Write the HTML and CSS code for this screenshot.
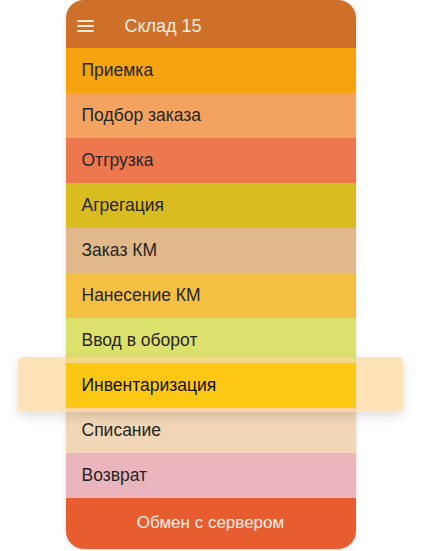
FILE: index.html
```html
<!DOCTYPE html>
<html lang="ru">
<head>
    <meta charset="UTF-8">
    <meta name="viewport" content="width=device-width, initial-scale=1.0">
    <title>Склад 15</title>
    <link rel="stylesheet" href="styles.css">
</head>
<body>
    <div class="phone">
        <div class="header">
            <span class="burger">
                <span></span><span></span><span></span>
            </span>
            <span class="title">Склад 15</span>
        </div>

        <div class="menu">
            <div class="row row-receive">Приемка</div>
            <div class="row row-pick">Подбор заказа</div>
            <div class="row row-ship">Отгрузка</div>
            <div class="row row-aggr">Агрегация</div>
            <div class="row row-order">Заказ КМ</div>
            <div class="row row-print">Нанесение КМ</div>
            <div class="row row-turn">Ввод в оборот</div>
            <div class="row row-active">Инвентаризация</div>
            <div class="row row-writeoff">Списание</div>
            <div class="row row-return">Возврат</div>
        </div>

        <div class="sync">Обмен с сервером</div>
    </div>
</body>
</html>
```

FILE: styles.css
```css
* {
    margin: 0;
    padding: 0;
    box-sizing: border-box;
}

body {
    font-family: "Liberation Sans", Arial, sans-serif;
    background: #fff;
    display: flex;
    justify-content: center;
    min-height: 100vh;
}

.phone {
    width: 290px;
    height: 549px;
    border-radius: 18px;
    box-shadow: 0 0 5px rgba(0, 0, 0, 0.12);
    display: flex;
    flex-direction: column;
}

.header {
    height: 48px;
    background: #ce6f2a;
    border-radius: 18px 18px 0 0;
    display: flex;
    align-items: center;
    padding: 4px 0 0 11px;
    color: #fff;
}

.burger {
    display: flex;
    flex-direction: column;
    gap: 3px;
    width: 17px;
    margin-right: 31px;
}

.burger span {
    height: 2px;
    background: #fde9d8;
    border-radius: 1px;
}

.title {
    font-size: 18px;
    color: #fbeee3;
}

.row {
    height: 45px;
    display: flex;
    align-items: center;
    padding-left: 16px;
    font-size: 17.5px;
    color: #262626;
}

.row-receive { background: #f5a30f; }
.row-pick { background: #f3a35f; }
.row-ship { background: #ee784e; }
.row-aggr { background: #d9bc20; }
.row-order { background: #e0b889; }
.row-print { background: #f5c042; }
.row-turn { background: #dce06c; }
.row-writeoff { background: #f1d7b6; }
.row-return { background: #eab5bd; }

/* selected item: pale band sticking out past the phone, fill on top */
.row-active {
    position: relative;
    z-index: 1;
    color: #111;
}

.row-active::before,
.row-active::after {
    content: "";
    position: absolute;
    z-index: -1;
}

.row-active::before {
    top: -6px;
    bottom: -4px;
    left: -48px;
    right: -47px;
    background: rgba(255, 214, 150, 0.68);
    border-radius: 5px;
    box-shadow: 0 4px 12px rgba(0, 0, 0, 0.13);
}

.row-active::after {
    inset: 0;
    background: #fcc813;
}

.sync {
    flex: 1;
    background: #e85d30;
    border-radius: 0 0 18px 18px;
    display: flex;
    align-items: center;
    justify-content: center;
    color: #fdf0ea;
    font-size: 17px;
    padding-bottom: 2px;
}
```
